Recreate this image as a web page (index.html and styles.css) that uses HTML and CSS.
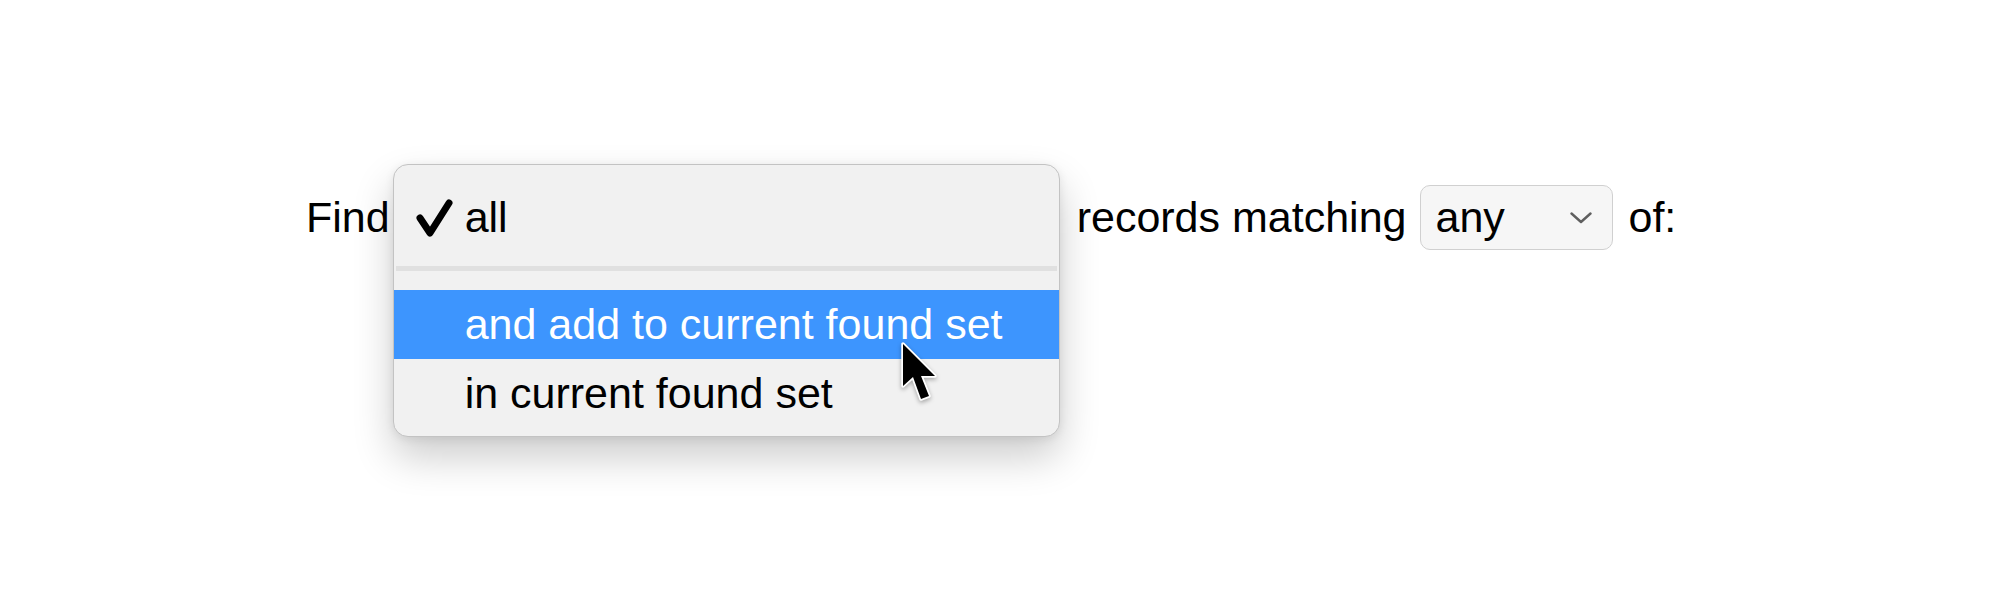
FILE: index.html
```html
<!DOCTYPE html>
<html lang="en">
<head>
    <meta charset="UTF-8">
    <title>Find Records</title>
    <link rel="stylesheet" href="styles.css">
</head>
<body>

    <div class="find-row">
        <span class="label find-label">Find</span>

        <div class="popup">
            <ul class="menu">
                <li class="menu-item">
                    <span class="mark">
                        <svg width="38" height="38" viewBox="0 0 38 38">
                            <polyline points="5,19 15,34 34,4" fill="none" stroke="#000" stroke-width="7" stroke-linecap="round" stroke-linejoin="round"/>
                        </svg>
                    </span>
                    all
                </li>
                <li class="menu-sep"></li>
                <li class="menu-item active"><span class="mark"></span>and add to current found set</li>
                <li class="menu-item"><span class="mark"></span>in current found set</li>
            </ul>

            <!-- mouse pointer over the highlighted item -->
            <svg class="cursor" width="44" height="68" viewBox="-5 -5 44 68">
                <path d="M0,0 L0,42 L10,33 L18,55 L26,52 L18,32 L32,32 Z" fill="#000" stroke="#fff" stroke-width="3.5" stroke-linejoin="round" paint-order="stroke"/>
            </svg>
        </div>

        <span class="label records-label">records matching</span>

        <div class="select">
            <span>any</span>
            <svg width="22" height="12" viewBox="0 0 22 12">
                <polyline points="1.5,1.5 11,10 20.5,1.5" fill="none" stroke="#5f5f5f" stroke-width="2.4" stroke-linecap="round" stroke-linejoin="round"/>
            </svg>
        </div>

        <span class="label">of:</span>
    </div>

</body>
</html>
```

FILE: styles.css
```css
html, body {
    height: 100%;
}

body {
    margin: 0;
    min-height: 600px;
    background: #fff;
    color: #000;
    font-family: "Liberation Sans", Arial, sans-serif;
    font-size: 43px;
}

.find-row {
    display: flex;
    align-items: center;
    padding: 185px 0 0 306px;
}

.label {
    white-space: nowrap;
}

.find-label {
    margin-right: 3px;
}

.records-label {
    margin-right: 14px;
}

.popup {
    position: relative;
    width: 667px;
    height: 65px;
    margin-right: 17px;
}

.menu {
    position: absolute;
    top: -21px;
    left: 0;
    width: 100%;
    box-sizing: border-box;
    list-style: none;
    margin: 0;
    padding: 18px 0 8px;
    background: #f1f1f1;
    border: 1px solid #c3c3c3;
    border-radius: 15px;
    box-shadow: 0 20px 40px rgba(0, 0, 0, 0.2), 0 2px 10px rgba(0, 0, 0, 0.08);
}

.menu-item {
    display: flex;
    align-items: center;
    height: 69px;
    padding-left: 21px;
    white-space: nowrap;
}

.menu-item.active {
    background: #3d95fe;
    color: #fff;
}

.mark {
    display: flex;
    align-items: center;
    width: 50px;
    height: 38px;
}

.menu-sep {
    height: 5px;
    margin: 14px 2px 19px;
    background: #e0e0e0;
}

.cursor {
    position: absolute;
    left: 505px;
    top: 154px;
    filter: drop-shadow(0 2px 2px rgba(0, 0, 0, 0.3));
}

.select {
    display: flex;
    align-items: center;
    justify-content: space-between;
    box-sizing: border-box;
    width: 193px;
    height: 65px;
    padding: 0 20px 0 14px;
    margin-right: 15px;
    background: #f6f6f6;
    border: 1px solid #d0d0d0;
    border-radius: 10px;
}
```
